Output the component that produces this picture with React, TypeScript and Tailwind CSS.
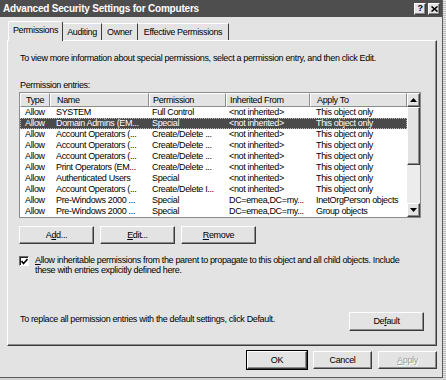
import React from 'react';
import clsx from 'clsx';

type Row = { type: string; name: string; perm: string; from: string; apply: string; selected?: boolean };

const rows: Row[] = [
    { type: 'Allow', name: 'SYSTEM', perm: 'Full Control', from: '<not inherited>', apply: 'This object only' },
    { type: 'Allow', name: 'Domain Admins (EM...', perm: 'Special', from: '<not inherited>', apply: 'This object only', selected: true },
    { type: 'Allow', name: 'Account Operators (...', perm: 'Create/Delete ...', from: '<not inherited>', apply: 'This object only' },
    { type: 'Allow', name: 'Account Operators (...', perm: 'Create/Delete ...', from: '<not inherited>', apply: 'This object only' },
    { type: 'Allow', name: 'Account Operators (...', perm: 'Create/Delete ...', from: '<not inherited>', apply: 'This object only' },
    { type: 'Allow', name: 'Print Operators (EM...', perm: 'Create/Delete ...', from: '<not inherited>', apply: 'This object only' },
    { type: 'Allow', name: 'Authenticated Users', perm: 'Special', from: '<not inherited>', apply: 'This object only' },
    { type: 'Allow', name: 'Account Operators (...', perm: 'Create/Delete I...', from: '<not inherited>', apply: 'This object only' },
    { type: 'Allow', name: 'Pre-Windows 2000 ...', perm: 'Special', from: 'DC=emea,DC=my...', apply: 'InetOrgPerson objects' },
    { type: 'Allow', name: 'Pre-Windows 2000 ...', perm: 'Special', from: 'DC=emea,DC=my...', apply: 'Group objects' },
];

const cols = [
    { label: 'Type', w: 'w-[30px]', pl: 'pl-[5px]' },
    { label: 'Name', w: 'w-[99px]', pl: 'pl-[6px]' },
    { label: 'Permission', w: 'w-[77px]', pl: 'pl-[3px]' },
    { label: 'Inherited From', w: 'w-[84px]', pl: 'pl-[3px]' },
    { label: 'Apply To', w: 'w-[97px]', pl: 'pl-[6px]' },
];

const raised = 'border border-t-white border-l-white border-r-[#3c3c3c] border-b-[#3c3c3c] shadow-[inset_-1px_-1px_0_#8c8c8c]';

const Btn: React.FC<{ className?: string; isDefault?: boolean; disabled?: boolean; children: React.ReactNode }> = ({ className, isDefault, disabled, children }) => (
    <div
        className={clsx(
            'flex items-center justify-center bg-[#e3e3e3]',
            raised,
            isDefault && 'outline outline-black',
            disabled && 'text-[#a0a0a0] [text-shadow:1px_1px_0_#fff]',
            className,
        )}
    >
        {children}
    </div>
);

const Arrow: React.FC<{ down?: boolean }> = ({ down }) => (
    <svg width="7" height="4" viewBox="0 0 7 4">
        {down ? <polygon points="0,0 7,0 3.5,4" fill="#000" /> : <polygon points="3.5,0 7,4 0,4" fill="#000" />}
    </svg>
);

export default function App() {
    return (
        <div className="flex h-[380px] w-[446px] bg-[#d2d2d2] font-['Liberation_Sans',Arial,sans-serif] text-[9px] leading-[11px] tracking-[-0.35px] text-black">
            <div className="flex h-[378px] w-[443px] flex-col border-r border-b border-r-[#5c5c5c] border-b-[#5c5c5c] bg-[#e3e3e3]">
                {/* title bar */}
                <div className="flex h-[17px] items-center justify-between bg-[#4e4e4e] pl-[3px] pr-[2px]">
                    <span className="text-[10px] font-bold tracking-[-0.2px] text-white">
                        Advanced Security Settings for Computers
                    </span>
                    <div className="flex gap-[2px]">
                        <div className={clsx('flex h-[12px] w-[12px] items-center justify-center bg-[#e3e3e3] text-[9px] font-bold', raised)}>?</div>
                        <div className={clsx('flex h-[12px] w-[12px] items-center justify-center bg-[#e3e3e3]', raised)}>
                            <svg width="7" height="6" viewBox="0 0 7 6">
                                <path d="M0.5 0.5 L6.5 5.5 M6.5 0.5 L0.5 5.5" stroke="#000" strokeWidth="1.6" />
                            </svg>
                        </div>
                    </div>
                </div>

                {/* tabs */}
                <div className="flex h-[23px] items-end whitespace-nowrap pl-[8px]">
                    <div className="relative z-10 -mb-px flex h-[20px] w-[55px] items-center justify-center rounded-t-[2px] border-t border-l border-r border-t-white border-l-white border-r-[#3c3c3c] bg-[#e3e3e3] pb-[2px]">
                        Permissions
                    </div>
                    <div className="flex h-[17px] w-[39px] items-center justify-center border-t border-r border-t-white border-r-[#3c3c3c]">Auditing</div>
                    <div className="flex h-[17px] w-[36px] items-center justify-center border-t border-r border-t-white border-r-[#3c3c3c]">Owner</div>
                    <div className="flex h-[17px] w-[91px] items-center justify-center border-t border-r border-t-white border-r-[#3c3c3c]">Effective Permissions</div>
                </div>

                {/* panel */}
                <div className="ml-[7px] flex h-[306px] w-[430px] flex-col border border-t-white border-l-white border-r-[#3c3c3c] border-b-[#3c3c3c] pl-[11px] pr-[12px] pt-[12px] shadow-[inset_-1px_-1px_0_#8c8c8c]">
                    <p className="whitespace-nowrap pl-[1px]">To view more information about special permissions, select a permission entry, and then click Edit.</p>
                    <p className="mt-[16px] pl-[1px]">Permission entries:</p>

                    <div className="mt-[1px] flex w-[402px] border border-[#8c8c8c] bg-white">
                        <div className="flex w-[387px] flex-col">
                            <div className="flex h-[14px] bg-[#e3e3e3]">
                                {cols.map((c) => (
                                    <div key={c.label} className={clsx('flex items-center whitespace-nowrap border-t border-l border-r border-b border-t-white border-l-white border-r-[#8c8c8c] border-b-[#8c8c8c]', c.w, c.pl)}>
                                        {c.label}
                                    </div>
                                ))}
                            </div>
                            {rows.map((r, i) => (
                                <div
                                    key={i}
                                    className={clsx(
                                        'flex h-[11px] whitespace-nowrap',
                                        r.selected && 'bg-[#4a4a4a] text-white outline outline-dotted outline-[#bbbbbb] -outline-offset-1',
                                    )}
                                >
                                    {[r.type, r.name, r.perm, r.from, r.apply].map((v, j) => (
                                        <div key={j} className={clsx('overflow-hidden', cols[j].w, cols[j].pl)}>
                                            {v}
                                        </div>
                                    ))}
                                </div>
                            ))}
                        </div>
                        {/* scrollbar */}
                        <div className="flex w-[13px] flex-col bg-[#ececec]">
                            <div className={clsx('flex h-[14px] items-center justify-center bg-[#e3e3e3]', raised)}>
                                <Arrow />
                            </div>
                            <div className={clsx('h-[58px] bg-[#e3e3e3]', raised)} />
                            <div className="flex-1" />
                            <div className={clsx('flex h-[14px] items-center justify-center bg-[#e3e3e3]', raised)}>
                                <Arrow down />
                            </div>
                        </div>
                    </div>

                    <div className="mt-[8px] flex gap-[6px]">
                        <Btn className="h-[18px] w-[75px]">
                            <span>
                                A<u>d</u>d...
                            </span>
                        </Btn>
                        <Btn className="h-[18px] w-[75px]">
                            <span>
                                <u>E</u>dit...
                            </span>
                        </Btn>
                        <Btn className="h-[18px] w-[75px]">
                            <span>
                                <u>R</u>emove
                            </span>
                        </Btn>
                    </div>

                    <div className="mt-[11px] flex items-start gap-[6px]">
                        <div className="mt-[1px] flex h-[10px] w-[10px] shrink-0 items-center justify-center border border-t-[#6a6a6a] border-l-[#6a6a6a] border-r-white border-b-white bg-white shadow-[inset_1px_1px_0_#222]">
                            <svg width="7" height="7" viewBox="0 0 7 7">
                                <path d="M0.5 3 L2.5 5.5 L6.5 1" stroke="#000" strokeWidth="1.6" fill="none" />
                            </svg>
                        </div>
                        <p className="whitespace-nowrap leading-[10px]">
                            <u>A</u>llow inheritable permissions from the parent to propagate to this object and all child objects. Include
                            <br />
                            these with entries explicitly defined here.
                        </p>
                    </div>

                    <div className="mt-[37px] flex items-center justify-between">
                        <p className="mb-[4px] whitespace-nowrap pl-[1px]">To replace all permission entries with the default settings, click Default.</p>
                        <Btn className="h-[19px] w-[75px]">
                            <span>
                                De<u>f</u>ault
                            </span>
                        </Btn>
                    </div>
                </div>

                {/* footer buttons */}
                <div className="mt-[5px] flex justify-end gap-[6px] pr-[5px]">
                    <Btn isDefault className="h-[18px] w-[60px]">
                        OK
                    </Btn>
                    <Btn className="h-[18px] w-[59px]">Cancel</Btn>
                    <Btn disabled className="h-[18px] w-[59px]">
                        <span>
                            <u>A</u>pply
                        </span>
                    </Btn>
                </div>
            </div>
            <div className="flex-1 bg-[repeating-linear-gradient(0deg,#bdbdbd_0px,#bdbdbd_1px,#e6e6e6_1px,#e6e6e6_2px)]" />
        </div>
    );
}
